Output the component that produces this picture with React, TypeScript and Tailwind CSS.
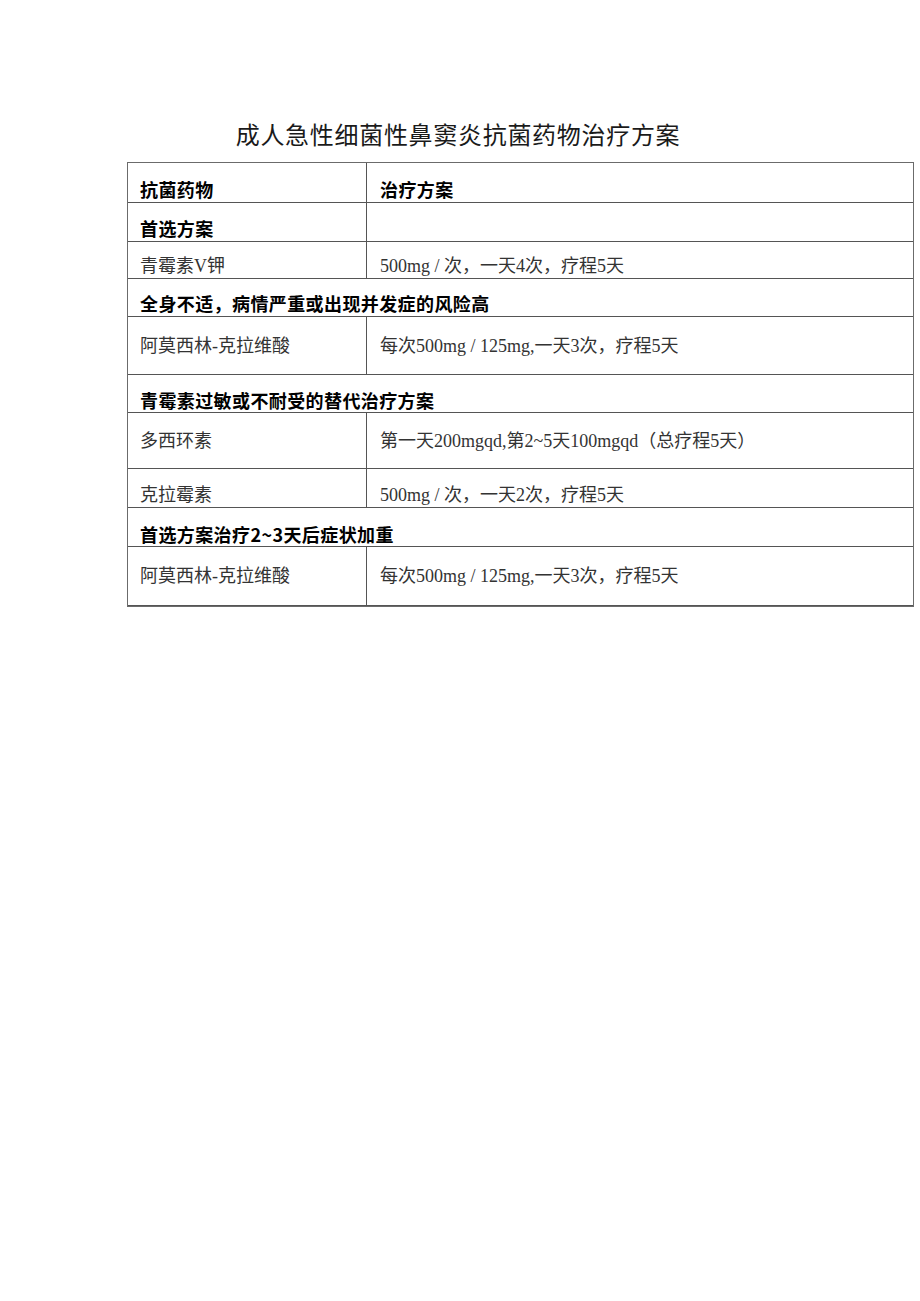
const cjk = "font-['Liberation_Serif','Noto_Sans_CJK_SC',serif]";
const hei = "font-['Noto_Sans_CJK_SC',sans-serif]";

type Row =
  | { kind: 'head'; left: string; right: string; h: string; align: string }
  | { kind: 'group'; text: string; h: string; align: string; split?: boolean }
  | { kind: 'drug'; left: string; right: string; h: string; align: string };

const rows: Row[] = [
  { kind: 'head', left: '抗菌药物', right: '治疗方案', h: 'h-[40px]', align: 'items-end pb-[4px]' },
  { kind: 'group', text: '首选方案', h: 'h-[39px]', align: 'items-end pb-[4px]', split: true },
  { kind: 'drug', left: '青霉素V钾', right: '500mg / 次，一天4次，疗程5天', h: 'h-[37px]', align: 'items-end pb-[3px]' },
  { kind: 'group', text: '全身不适，病情严重或出现并发症的风险高', h: 'h-[38px]', align: 'items-end pb-[4px]' },
  { kind: 'drug', left: '阿莫西林-克拉维酸', right: '每次500mg / 125mg,一天3次，疗程5天', h: 'h-[58px]', align: 'items-center' },
  { kind: 'group', text: '青霉素过敏或不耐受的替代治疗方案', h: 'h-[38px]', align: 'items-end pb-[3px]' },
  { kind: 'drug', left: '多西环素', right: '第一天200mgqd,第2~5天100mgqd（总疗程5天）', h: 'h-[56px]', align: 'items-center' },
  { kind: 'drug', left: '克拉霉素', right: '500mg / 次，一天2次，疗程5天', h: 'h-[39px]', align: 'items-end pb-[3px]' },
  { kind: 'group', text: '首选方案治疗2~3天后症状加重', h: 'h-[39px]', align: 'items-end pb-[3px]' },
  { kind: 'drug', left: '阿莫西林-克拉维酸', right: '每次500mg / 125mg,一天3次，疗程5天', h: 'h-[59px]', align: 'items-center' },
];

export default function App() {
  return (
    <div className="w-[920px] h-[1301px] bg-white">
      <div className="pt-[122px] h-[162px]">
        <h1
          className={`${cjk} text-center text-[24px] leading-[28px] tracking-[0.7px] text-[#1a1a1a] font-normal pr-[4px]`}
        >
          成人急性细菌性鼻窦炎抗菌药物治疗方案
        </h1>
      </div>

      <div className="ml-[127px] w-[787px] border border-[#6b6b6b]">
        {rows.map((row, i) => {
          if (row.kind === 'group') {
            return (
              <div key={i} className={`flex ${row.h} border-b border-[#555]`}>
                <div
                  className={`flex ${row.align} ${row.split ? 'w-[239px] border-r border-[#555]' : 'flex-1'} pl-[12px] ${hei} font-bold text-[18px] leading-[18px] tracking-[0.4px] text-black whitespace-nowrap`}
                >
                  {row.text}
                </div>
                {row.split && <div className="flex-1" />}
              </div>
            );
          }
          const bold = row.kind === 'head';
          const textCls = bold
            ? `${hei} font-bold text-black tracking-[0.4px]`
            : `${cjk} text-[#333]`;
          return (
            <div key={i} className={`flex ${row.h} border-b border-[#555]`}>
              <div
                className={`flex ${row.align} w-[239px] border-r border-[#555] pl-[12px] ${textCls} text-[18px] leading-[18px] whitespace-nowrap`}
              >
                {row.left}
              </div>
              <div
                className={`flex ${row.align} flex-1 pl-[13px] ${textCls} text-[18px] leading-[18px] whitespace-nowrap`}
              >
                {row.right}
              </div>
            </div>
          );
        })}
      </div>
    </div>
  );
}
